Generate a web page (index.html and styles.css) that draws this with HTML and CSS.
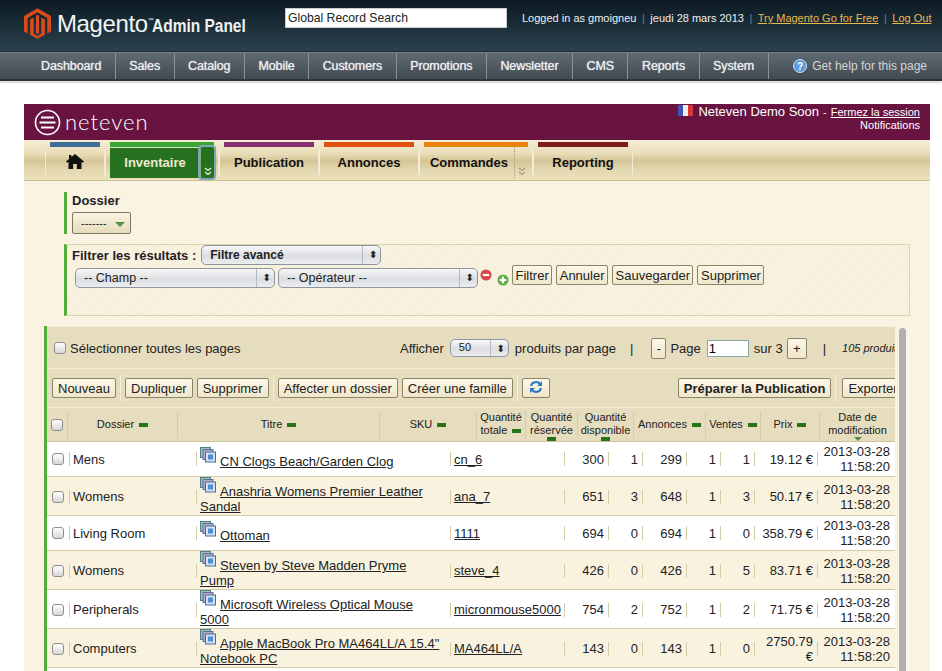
FILE: index.html
```html
<!DOCTYPE html>
<html>
<head>
    <meta charset="utf-8">
    <title>Magento Admin Panel</title>
    <link rel="stylesheet" href="styles.css">
</head>
<body>

<div class="header">
    <svg class="mage-logo" width="27" height="31" viewBox="0 0 29 33">
        <path fill="#d8491c" d="M14.5 0 29 8.4V25l-4 2.3V10.7L14.5 4.6 4 10.7v16.6L0 25V8.4z"/>
        <path fill="#d8491c" d="M6.5 12.2 10.5 10v17.6l4 2.3 4-2.3V10l4 2.2v16.3L14.5 33l-8-4.5z"/>
        <path fill="#d8491c" d="M12.8 7.8 14.5 7l1.7.8v19l-1.7 1-1.7-1z"/>
    </svg>
    <div class="mage-name">Magento<sup>™</sup></div>
    <div class="mage-panel">Admin Panel</div>
    <input class="global-search" type="text" value="Global Record Search">
    <div class="header-links">
        Logged in as gmoigneu <span class="pipe">|</span> jeudi 28 mars 2013 <span class="pipe">|</span>
        <a href="#">Try Magento Go for Free</a> <span class="pipe">|</span> <a href="#">Log Out</a>
    </div>
</div>

<div class="nav">
    <a class="first" href="#">Dashboard</a><a href="#">Sales</a><a href="#">Catalog</a><a href="#">Mobile</a><a href="#">Customers</a><a href="#">Promotions</a><a href="#">Newsletter</a><a href="#">CMS</a><a href="#">Reports</a><a href="#">System</a>
    <div class="help">
        <svg width="14" height="14" viewBox="0 0 14 14"><circle cx="7" cy="7" r="6.5" fill="#5f9be0" stroke="#cfe0f2"/><text x="7" y="10.5" text-anchor="middle" font-size="10" font-weight="bold" fill="#fff" font-family="Liberation Sans">?</text></svg>
        Get help for this page
    </div>
</div>

<div class="app">
    <div class="brand">
        <svg width="27" height="27" viewBox="0 0 27 27" fill="none" stroke="#fff"><circle cx="13.5" cy="13.5" r="12" stroke-width="1.6"/><path stroke-width="1.8" d="M7 8.5h13M5.5 13.5h16M7 18.5h13"/></svg>
        <div class="brand-name">neteven</div>
        <div class="account">
            <div class="account-line">
                <svg class="flag" width="15" height="11" viewBox="0 0 15 11"><rect width="5" height="11" fill="#3f55b5"/><rect x="5" width="5" height="11" fill="#eee"/><rect x="10" width="5" height="11" fill="#d9363a"/></svg>
                <span class="account-name">Neteven Demo Soon</span> - <a href="#">Fermez la session</a>
            </div>
            <div class="notif">Notifications</div>
        </div>
    </div>

    <div class="tabs">
        <div class="tab tab-home">
            <svg width="18" height="15" viewBox="0 0 18 15"><path fill="#111" d="M9 0 18 7.6l-1.2 1.2L15.5 7.7V15h-4.6v-5H7.1v5H2.5V7.7L1.2 8.8 0 7.6 3 5V1h2.4v2z"/></svg>
        </div>
        <div class="tab tab-inv">
            <span class="tab-green">Inventaire</span>
            <span class="tab-drop">
                <svg width="8" height="9" viewBox="0 0 8 9" fill="none" stroke="#e8f3d8" stroke-width="1.3"><path d="M1 1l3 2.5L7 1M1 5l3 2.5L7 5"/></svg>
            </span>
        </div>
        <div class="tab tab-pub">Publication</div>
        <div class="tab tab-ann">Annonces</div>
        <div class="tab tab-cmd">
            Commandes
            <span class="tab-more">
                <svg width="8" height="9" viewBox="0 0 8 9" fill="none" stroke="#a59b78" stroke-width="1.2"><path d="M1 1l3 2.5L7 1M1 5l3 2.5L7 5"/></svg>
            </span>
        </div>
        <div class="tab tab-rep">Reporting</div>
    </div>

    <div class="content">
        <div class="folder">
            <div class="folder-title">Dossier</div>
            <div class="folder-select">------- <i class="arrow"></i></div>
        </div>

        <div class="filters">
            <div class="filter-top">
                <b>Filtrer les résultats :</b>
                <div class="mac-select bold filter-kind">Filtre avancé</div>
            </div>
            <div class="filter-row">
                <div class="mac-select field">-- Champ --</div>
                <div class="mac-select oper">-- Opérateur --</div>
                <svg class="round" width="12" height="12" viewBox="0 0 13 13"><circle cx="6.5" cy="6.5" r="6" fill="#d9474b"/><rect x="3" y="5.3" width="7" height="2.4" fill="#fff"/></svg>
                <svg class="round plus" width="12" height="12" viewBox="0 0 13 13"><circle cx="6.5" cy="6.5" r="6" fill="#62b04c"/><path fill="#fff" d="M5.3 3h2.4v2.3H10v2.4H7.7V10H5.3V7.7H3V5.3h2.3z"/></svg>
                <button class="btn">Filtrer</button>
                <button class="btn">Annuler</button>
                <button class="btn">Sauvegarder</button>
                <button class="btn">Supprimer</button>
            </div>
        </div>

        <div class="grid-wrap">
            <div class="grid">
                <div class="pager">
                    <label class="select-all"><i class="check"></i>Sélectionner toutes les pages</label>
                    <span class="show-label">Afficher</span>
                    <div class="mac-select per-page">50</div>
                    <span>produits par page</span>
                    <span class="bar">|</span>
                    <button class="btn small">-</button>
                    <span>Page</span>
                    <input class="page-input" type="text" value="1">
                    <span>sur 3</span>
                    <button class="btn small plus-btn">+</button>
                    <span class="bar">|</span>
                    <em>105 produits</em>
                </div>
                <div class="actions">
                    <button class="btn">Nouveau</button>
                    <i class="act-sep"></i>
                    <button class="btn">Dupliquer</button>
                    <button class="btn">Supprimer</button>
                    <i class="act-sep"></i>
                    <button class="btn">Affecter un dossier</button>
                    <button class="btn">Créer une famille</button>
                    <i class="act-sep"></i>
                    <button class="btn refresh">
                        <svg width="14" height="14" viewBox="0 0 14 14" fill="none" stroke="#2f78c8" stroke-width="2"><path d="M2 6a5 4.5 0 0 1 9-2"/><path d="M12 8a5 4.5 0 0 1-9 2"/><path fill="#2f78c8" stroke="none" d="M13 1v5H8zM1 13V8h5z"/></svg>
                    </button>
                    <button class="btn strong">Préparer la Publication</button>
                    <i class="act-sep"></i>
                    <button class="btn export">Exporter</button>
                </div>
                <div class="head">
                    <div class="hc"><i class="check"></i></div>
                    <div class="hc">Dossier <i class="sort"></i></div>
                    <div class="hc">Titre <i class="sort"></i></div>
                    <div class="hc">SKU <i class="sort"></i></div>
                    <div class="hc tight">Quantité<br>totale <i class="sort"></i></div>
                    <div class="hc tight">Quantité<br>réservée<i class="sort under"></i></div>
                    <div class="hc tight">Quantité<br>disponible<i class="sort under"></i></div>
                    <div class="hc">Annonces <i class="sort"></i></div>
                    <div class="hc">Ventes <i class="sort"></i></div>
                    <div class="hc">Prix <i class="sort"></i></div>
                    <div class="hc tight last">Date de<br>modification<i class="sort-down"></i></div>
                </div>

                <div class="row h35">
                    <div class="c"><i class="check"></i></div><div class="c sep">Mens</div>
                    <div class="c sep title"><a href="#"><svg class="ico"><use href="#prod"/></svg>CN Clogs Beach/Garden Clog</a></div>
                    <div class="c sep"><a href="#">cn_6</a></div>
                    <div class="c sep num">300</div><div class="c sep num">1</div><div class="c sep num">299</div><div class="c sep num">1</div><div class="c sep num">1</div>
                    <div class="c sep num">19.12 €</div><div class="c sep num date">2013-03-28<br>11:58:20</div>
                </div>
                <div class="row odd h39">
                    <div class="c"><i class="check"></i></div><div class="c sep">Womens</div>
                    <div class="c sep title"><a href="#"><svg class="ico"><use href="#prod"/></svg>Anashria Womens Premier Leather Sandal</a></div>
                    <div class="c sep"><a href="#">ana_7</a></div>
                    <div class="c sep num">651</div><div class="c sep num">3</div><div class="c sep num">648</div><div class="c sep num">1</div><div class="c sep num">3</div>
                    <div class="c sep num">50.17 €</div><div class="c sep num date">2013-03-28<br>11:58:20</div>
                </div>
                <div class="row h35">
                    <div class="c"><i class="check"></i></div><div class="c sep">Living Room</div>
                    <div class="c sep title"><a href="#"><svg class="ico"><use href="#prod"/></svg>Ottoman</a></div>
                    <div class="c sep"><a href="#">1111</a></div>
                    <div class="c sep num">694</div><div class="c sep num">0</div><div class="c sep num">694</div><div class="c sep num">1</div><div class="c sep num">0</div>
                    <div class="c sep num">358.79 €</div><div class="c sep num date">2013-03-28<br>11:58:20</div>
                </div>
                <div class="row odd h39">
                    <div class="c"><i class="check"></i></div><div class="c sep">Womens</div>
                    <div class="c sep title"><a href="#"><svg class="ico"><use href="#prod"/></svg>Steven by Steve Madden Pryme Pump</a></div>
                    <div class="c sep"><a href="#">steve_4</a></div>
                    <div class="c sep num">426</div><div class="c sep num">0</div><div class="c sep num">426</div><div class="c sep num">1</div><div class="c sep num">5</div>
                    <div class="c sep num">83.71 €</div><div class="c sep num date">2013-03-28<br>11:58:20</div>
                </div>
                <div class="row h39">
                    <div class="c"><i class="check"></i></div><div class="c sep">Peripherals</div>
                    <div class="c sep title"><a href="#"><svg class="ico"><use href="#prod"/></svg>Microsoft Wireless Optical Mouse 5000</a></div>
                    <div class="c sep"><a href="#">micronmouse5000</a></div>
                    <div class="c sep num">754</div><div class="c sep num">2</div><div class="c sep num">752</div><div class="c sep num">1</div><div class="c sep num">2</div>
                    <div class="c sep num">71.75 €</div><div class="c sep num date">2013-03-28<br>11:58:20</div>
                </div>
                <div class="row odd h39">
                    <div class="c"><i class="check"></i></div><div class="c sep">Computers</div>
                    <div class="c sep title"><a href="#"><svg class="ico"><use href="#prod"/></svg>Apple MacBook Pro MA464LL/A 15.4" Notebook PC</a></div>
                    <div class="c sep"><a href="#">MA464LL/A</a></div>
                    <div class="c sep num">143</div><div class="c sep num">0</div><div class="c sep num">143</div><div class="c sep num">1</div><div class="c sep num">0</div>
                    <div class="c sep num">2750.79 €</div><div class="c sep num date">2013-03-28<br>11:58:20</div>
                </div>
            </div>
            <div class="scrollbar"><div class="thumb"></div></div>
        </div>
    </div>
</div>

<svg class="defs" width="0" height="0">
    <symbol id="prod" viewBox="0 0 16 16">
        <rect x="0.5" y="0.5" width="10" height="10" fill="#9fc3a8" stroke="#4d7f93"/>
        <rect x="3" y="2.5" width="10" height="10" fill="#b8a6c9" stroke="#5a6f9c"/>
        <rect x="5.5" y="5" width="10" height="10" fill="#d4e2f2" stroke="#40709f"/>
        <rect x="8" y="7.5" width="5" height="5" fill="#4f8fd0"/>
    </symbol>
</svg>

</body>
</html>
```

FILE: styles.css
```css
* {
    box-sizing: border-box;
}
body {
    margin: 0;
    height: 671px;
    overflow: hidden;
    background: #fff;
    font-family: "Liberation Sans", Arial, sans-serif;
    font-size: 13px;
    color: #222;
}
a {
    color: inherit;
}

/* magento header */
.header {
    height: 52px;
    display: flex;
    align-items: flex-start;
    background: linear-gradient(#0c1a22, #2b414e);
    border-bottom: 1px solid #1f2e37;
    color: #fff;
}
.mage-logo {
    margin: 8px 0 0 24px;
}
.mage-name {
    width: 90px;
    margin: 10px 0 0 6px;
    font-size: 24px;
    letter-spacing: -0.4px;
    line-height: 28px;
    white-space: nowrap;
    color: #f2f4f5;
}
.mage-name sup {
    font-size: 6px;
    vertical-align: 10px;
    line-height: 0;
}
.mage-panel {
    width: 96px;
    margin: 14px 0 0 5px;
    font-size: 18px;
    font-weight: bold;
    line-height: 24px;
    white-space: nowrap;
    transform: scaleX(0.86);
    transform-origin: left;
    color: #eef0f1;
}
.global-search {
    width: 222px;
    height: 20px;
    margin: 8px 0 0 37px;
    padding: 0 2px;
    border: 1px solid #c8ccce;
    border-radius: 0;
    background: #fff;
    font-family: inherit;
    font-size: 12.2px;
    color: #222;
}
.header-links {
    margin: 10px 0 0 15px;
    font-size: 11px;
    line-height: 16px;
    white-space: nowrap;
    color: #eceff0;
}
.header-links a {
    color: #e7b94e;
}
.pipe {
    margin: 0 2.5px;
    color: #6f8290;
}

/* magento menu */
.nav {
    height: 29px;
    display: flex;
    align-items: center;
    background: linear-gradient(#5f6a71, #424a50);
    border-top: 1px solid #76808a;
    border-bottom: 2px solid #2f353a;
    box-shadow: 0 2px 2px #d8d8d8;
    font-size: 12.5px;
    letter-spacing: -0.1px;
    text-shadow: 0 0 1px #e6e8e9;
    color: #eceeef;
}
.nav a {
    height: 26px;
    padding: 6px 13.5px 0;
    border-right: 1px solid #8b9298;
    text-decoration: none;
}
.nav a.first {
    padding-left: 41px;
}
.help {
    margin: 0 15px 0 auto;
    display: flex;
    align-items: center;
    gap: 5px;
    white-space: nowrap;
    font-size: 12px;
    letter-spacing: 0;
    text-shadow: none;
    color: #d3d6d8;
}

/* neteven frame */
.app {
    width: 906px;
    margin: 23px 0 0 24px;
}
.brand {
    height: 36px;
    display: flex;
    align-items: flex-start;
    padding: 5px 10px 0 10px;
    background: #681340;
    color: #fff;
}
.brand-name {
    margin: 1px 0 0 4px;
    font-family: Lato, sans-serif;
    font-weight: 300;
    font-size: 22px;
    letter-spacing: 1px;
    line-height: 24px;
}
.account {
    margin: -5px 0 0 auto;
    text-align: right;
    font-size: 11px;
    line-height: 13px;
}
.account-line {
    display: flex;
    align-items: center;
    justify-content: flex-end;
    gap: 4px;
    line-height: 16px;
}
.account-name {
    font-size: 13px;
}
.flag {
    margin: -4px 1px 0 0;
}
.notif {
    margin-top: -1px;
}

/* tabs */
.tabs {
    height: 41px;
    display: flex;
    padding: 2px 0 0 21px;
    background: linear-gradient(#f6eed6 0, #e8dcb6 35%, #d4c597 52%, #e4d8b0 75%, #ece1be 100%);
    border-bottom: 1px solid #c9c096;
    font-size: 13px;
    font-weight: bold;
    color: #111;
}
.tab {
    position: relative;
    height: 34px;
    margin: 0 5px;
    padding-top: 8px;
    text-align: center;
    border-top: 5px solid;
}
.tab::before, .tab::after {
    content: "";
    position: absolute;
    top: 2px;
    bottom: 1px;
    width: 1px;
    background: #f3ecd5;
}
.tab::before {
    left: -5px;
}
.tab::after {
    right: -5px;
}
.tab-home {
    width: 50px;
    padding-top: 7px;
    border-color: #3f6f97;
}
.tab-inv {
    width: 104px;
    height: 36px;
    display: flex;
    padding: 0;
    border-color: #3ca535;
    background: #26711f;
    color: #f0ead2;
}
.tab-green {
    flex: 1;
    padding-top: 7px;
    border-top: 1px solid #cfe6c4;
}
.tab-drop {
    position: relative;
    width: 14px;
    padding-top: 20px;
    text-align: center;
    border-left: 1px dotted #dfe8d0;
    box-shadow: 0 0 0 2px #7ea7bd;
    border-radius: 2px;
    line-height: 8px;
}
.tab-pub {
    width: 90px;
    border-color: #85306e;
}
.tab-ann {
    width: 90px;
    border-color: #e2500f;
}
.tab-cmd {
    width: 104px;
    padding-right: 14px;
    border-color: #e8820c;
}
.tab-more {
    position: absolute;
    right: 0;
    top: 0;
    height: 31px;
    width: 14px;
    padding-top: 20px;
    border-left: 1px dotted #a59b78;
    line-height: 8px;
}
.tab-rep {
    width: 90px;
    border-color: #7d1c1a;
}

/* main panel */
.content {
    height: 491px;
    padding-top: 11px;
    background: #faf3e1;
}
.folder {
    height: 42px;
    margin-left: 40px;
    padding-left: 5px;
    border-left: 3px solid #52ad3a;
}
.folder-title {
    font-size: 13px;
    font-weight: bold;
    line-height: 17px;
}
.folder-select {
    width: 59px;
    height: 22px;
    margin-top: 3px;
    padding: 3px 0 0 8px;
    border: 1px solid #7d7866;
    border-radius: 2px;
    background: linear-gradient(#fbf5e2, #e6dcba);
    line-height: 14px;
    font-size: 11px;
}
.arrow {
    display: inline-block;
    margin-left: 5px;
    border: 5px solid transparent;
    border-top: 5px solid #4e8d3e;
    border-bottom: 0;
    vertical-align: middle;
}
.filters {
    height: 72px;
    margin: 10px 20px 0 40px;
    padding: 0 0 0 5px;
    border: 1px solid #dcd3ae;
    border-left: 3px solid #52ad3a;
    background: repeating-linear-gradient(135deg, #faf3e1 0, #faf3e1 2px, #f4ecd6 2px, #f4ecd6 3px);
    font-size: 13px;
}
.filter-top {
    display: flex;
    align-items: center;
    gap: 5px;
    height: 20px;
}
.filter-row {
    display: flex;
    align-items: center;
    height: 24px;
    margin: 1px 0 0 3px;
}
.filter-row .btn {
    align-self: flex-start;
    margin-top: -1px;
    padding: 0 2.5px;
}
.mac-select {
    position: relative;
    height: 20px;
    padding: 0 0 0 8px;
    border: 1px solid #8d95a0;
    border-radius: 5px;
    background: linear-gradient(#f8f8f8, #dcdde1 55%, #ecedef);
    font-size: 12.5px;
    line-height: 18px;
    color: #222;
}
.mac-select::after {
    content: "";
    position: absolute;
    top: 0;
    right: 0;
    width: 17px;
    height: 18px;
    border-left: 1px solid #b5b9c0;
}
.mac-select::before {
    content: "\2B0D";
    position: absolute;
    top: 0;
    right: 3px;
    font-family: "DejaVu Sans", sans-serif;
    font-size: 10px;
    line-height: 18px;
    color: #222;
}
.bold {
    font-weight: bold;
    font-size: 12px;
}
.filter-kind {
    width: 180px;
}
.field {
    width: 200px;
}
.oper {
    width: 200px;
    margin-left: 3px;
}
.round {
    margin: 0 2px 6px 2px;
}
.round.plus {
    margin: 3px 3px 0 3px;
}
.btn {
    height: 20px;
    margin-right: 4px;
    padding: 0 3px;
    border: 1px solid #8a8469;
    border-radius: 2px;
    background: linear-gradient(#fcf7e8, #efe6ca);
    font-family: inherit;
    font-size: 13px;
    color: #222;
}

/* product grid */
.grid-wrap {
    display: flex;
    margin: 10px 0 0 20px;
    height: 346px;
}
.grid {
    width: 851px;
    overflow: hidden;
    border-left: 3px solid #52ad3a;
    background: #fff;
}
.scrollbar {
    width: 14px;
    padding: 2px 2px 0 4px;
    background: #f7f3e6;
    border-right: 1px solid #fff;
}
.thumb {
    height: 100%;
    background: #b0b0b0;
    border-radius: 4px 4px 0 0;
}
.pager {
    width: 900px;
    height: 43px;
    display: flex;
    align-items: center;
    white-space: nowrap;
    padding: 1px 0 0 7px;
    background: #e6dcbe;
    border-top: 1px solid #f4eed8;
    border-bottom: 1px solid #f4eed8;
    font-size: 13px;
}
.select-all {
    display: flex;
    align-items: center;
    width: 346px;
}
.select-all .check {
    margin-right: 4px;
}
.show-label {
    margin-right: 6px;
}
.per-page {
    width: 59px;
    height: 18px;
    line-height: 15px;
    margin-right: 6px;
    font-size: 11px;
}
.bar {
    margin: 0 14px;
}
.btn.small {
    width: 15px;
    height: 21px;
    margin: 0 4px 0 4px;
    padding: 0;
}
.btn.plus-btn {
    width: 20px;
    margin-right: 2px;
}
.page-input {
    width: 42px;
    height: 17px;
    margin: 0 5px 0 6px;
    padding: 0 1px;
    border: 1px solid #8aa;
    border-radius: 0;
    font-size: 13px;
    font-family: inherit;
}
.pager em {
    margin-left: 2px;
    font-size: 11px;
}
.actions {
    width: 900px;
    height: 39px;
    display: flex;
    align-items: center;
    padding: 0 0 0 5px;
    background: #e6dcbe;
    border-bottom: 1px solid #f4eed8;
}
.actions .btn {
    flex: none;
    margin-right: 4px;
    padding: 0 5px;
}
.act-sep {
    flex: none;
    width: 1px;
    height: 26px;
    margin: 0 4px 0 0;
    background: #f4eed8;
}
.actions .refresh {
    width: 28px;
    padding: 1px 0 0;
}
.actions .strong {
    margin-left: 124px;
    font-weight: bold;
}
.actions .export {
    margin-left: 2px;
}
.head {
    display: grid;
    grid-template-columns: 21px 110px 202px 97px 49px 52px 56px 72px 55px 59px 75px;
    height: 34px;
    background: #e6dcbe;
    border-bottom: 1px solid #cfc59d;
    font-size: 11px;
    color: #222;
}
.hc {
    position: relative;
    align-self: center;
    height: 28px;
    display: flex;
    align-items: center;
    justify-content: center;
    text-align: center;
    gap: 0 3px;
    border-right: 1px solid #d6cca6;
    line-height: 13px;
}
.hc.tight {
    display: block;
}
.hc.last {
    border-right: 0;
}
.check {
    display: inline-block;
    flex: none;
    width: 12px;
    height: 12px;
    border: 1px solid #8f8f8f;
    border-radius: 3px;
    background: linear-gradient(#fff, #d6d6d6);
}
.sort {
    display: inline-block;
    width: 9px;
    height: 4px;
    margin-left: 2px;
    background: #267318;
    vertical-align: middle;
}
.sort.under {
    display: block;
    margin: 0 auto;
}
.sort-down {
    display: block;
    width: 0;
    margin: 0 auto;
    border: 4px solid transparent;
    border-top: 4px solid #4e8d3e;
    border-bottom: 0;
}
.row {
    display: grid;
    grid-template-columns: 22px 127px 254px 114px 44px 34px 44px 34px 34px 63px 78px;
    align-items: center;
    background: #fff;
    border-bottom: 1px solid #d3cba5;
    font-size: 13px;
}
.row.odd {
    background: #f9f2df;
}
.h35 {
    height: 35px;
}
.h39 {
    height: 39px;
}
.c {
    padding: 0 3px 0 4px;
    line-height: 15px;
}
.c:first-child {
    padding: 0 0 0 5px;
    line-height: 0;
}
.sep {
    position: relative;
}
.sep::before {
    content: "";
    position: absolute;
    left: 0;
    top: 50%;
    height: 14px;
    margin-top: -7px;
    border-left: 1px solid #d3cba5;
}
.title {
    padding-right: 10px;
    padding-bottom: 2px;
}
.ico {
    width: 16px;
    height: 16px;
    margin-right: 4px;
    vertical-align: 3px;
}
.num {
    text-align: right;
    padding-right: 4px;
}
.date {
    padding-right: 5px;
}
.defs {
    position: absolute;
}
```
